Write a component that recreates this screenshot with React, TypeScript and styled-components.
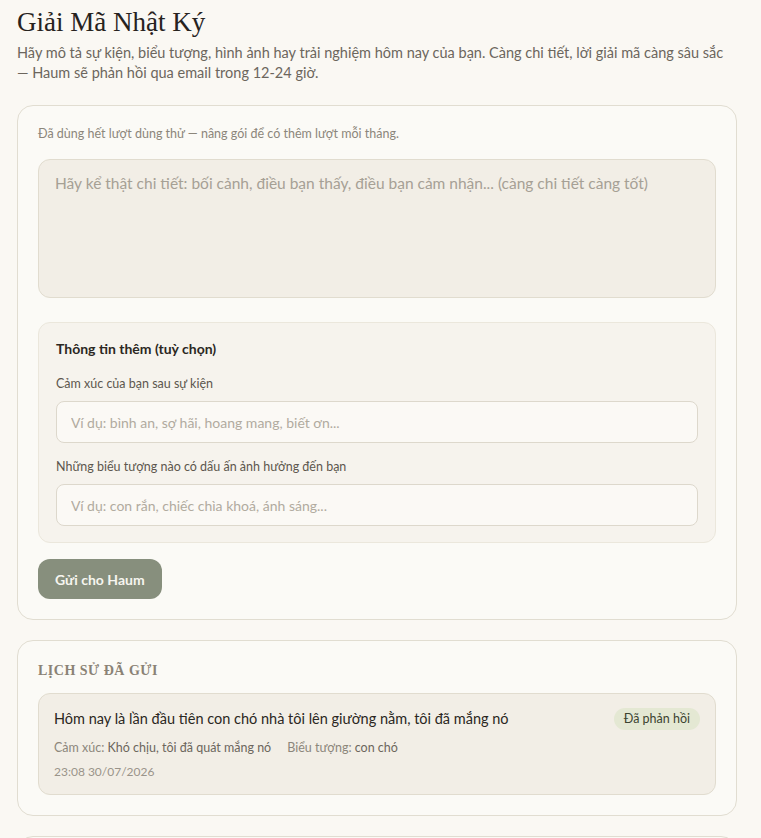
import React from 'react';
import styled, { createGlobalStyle } from 'styled-components';

const GlobalStyle = createGlobalStyle`
  * { box-sizing: border-box; }
  body {
    margin: 0;
    background: #faf8f3;
    font-family: Lato, "Noto Sans", sans-serif;
    color: #2b2722;
  }
`;

interface Entry {
  text: string;
  emotion: string;
  symbol: string;
  date: string;
  status: string;
}

const history: Entry[] = [
  {
    text: 'Hôm nay là lần đầu tiên con chó nhà tôi lên giường nằm, tôi đã mắng nó',
    emotion: 'Khó chịu, tôi đã quát mắng nó',
    symbol: 'con chó',
    date: '23:08 30/07/2026',
    status: 'Đã phản hồi',
  },
];

export default function App() {
  return (
    <>
      <GlobalStyle />
      <Page>
        <Title>Giải Mã Nhật Ký</Title>
        <Intro>
          Hãy mô tả sự kiện, biểu tượng, hình ảnh hay trải nghiệm hôm nay của bạn. Càng chi tiết, lời giải mã càng sâu sắc
          — Haum sẽ phản hồi qua email trong 12-24 giờ.
        </Intro>

        <Card>
          <Notice>Đã dùng hết lượt dùng thử — nâng gói để có thêm lượt mỗi tháng.</Notice>
          <Story placeholder="Hãy kể thật chi tiết: bối cảnh, điều bạn thấy, điều bạn cảm nhận... (càng chi tiết càng tốt)" />

          <Extra>
            <ExtraTitle>Thông tin thêm (tuỳ chọn)</ExtraTitle>
            <Field>
              <Label>Cảm xúc của bạn sau sự kiện</Label>
              <Input placeholder="Ví dụ: bình an, sợ hãi, hoang mang, biết ơn..." />
            </Field>
            <Field>
              <Label>Những biểu tượng nào có dấu ấn ảnh hưởng đến bạn</Label>
              <Input placeholder="Ví dụ: con rắn, chiếc chìa khoá, ánh sáng..." />
            </Field>
          </Extra>

          <SubmitButton type="button">Gửi cho Haum</SubmitButton>
        </Card>

        <Card>
          <SectionTitle>Lịch sử đã gửi</SectionTitle>
          {history.map((item, i) => (
            <Item key={i}>
              <ItemHead>
                <ItemText>{item.text}</ItemText>
                <Badge>{item.status}</Badge>
              </ItemHead>
              <Meta>
                <span>Cảm xúc: <strong>{item.emotion}</strong></span>
                <span>Biểu tượng: <strong>{item.symbol}</strong></span>
              </Meta>
              <DateLine>{item.date}</DateLine>
            </Item>
          ))}
        </Card>

        <Card />
      </Page>
    </>
  );
}

const Page = styled.div`
  width: 737px;
  padding: 7px 0 0 17px;
  display: flex;
  flex-direction: column;
`;

const Title = styled.h1`
  margin: 0;
  font-family: "Liberation Serif", "DejaVu Serif", serif;
  font-weight: 400;
  font-size: 27px;
  line-height: 30px;
  color: #27231e;
`;

const Intro = styled.p`
  margin: 6px 0 0;
  font-size: 14.5px;
  line-height: 20px;
  color: #6c665d;
`;

const Card = styled.section`
  margin-top: 20px;
  padding: 20px;
  border: 1px solid #e1ddd1;
  border-radius: 16px;
  background: #fbfaf6;
  display: flex;
  flex-direction: column;
  align-items: flex-start;

  &:first-of-type { margin-top: 22px; }
  &:last-child { min-height: 60px; }
`;

const Notice = styled.p`
  margin: 0 0 17px;
  font-size: 12.5px;
  line-height: 16px;
  color: #8c867b;
`;

const Story = styled.textarea`
  width: 100%;
  height: 139px;
  padding: 12px 16px;
  border: 1px solid #e1dccf;
  border-radius: 12px;
  background: #f2eee6;
  font-family: inherit;
  font-size: 15.5px;
  line-height: 22px;
  color: #2b2722;
  resize: none;
  outline: none;

  &::placeholder { color: #a6a095; }
`;

const Extra = styled.div`
  width: 100%;
  margin-top: 24px;
  padding: 17px 17px 16px;
  border: 1px solid #ebe7dc;
  border-radius: 12px;
  background: #f6f3ed;
  display: flex;
  flex-direction: column;
  gap: 16px;
`;

const ExtraTitle = styled.h3`
  margin: 0 0 2px;
  font-size: 14px;
  font-weight: 700;
  line-height: 18px;
  color: #2b2722;
`;

const Field = styled.label`
  display: flex;
  flex-direction: column;
  gap: 9px;
`;

const Label = styled.span`
  font-size: 12.5px;
  line-height: 16px;
  color: #5d574e;
`;

const Input = styled.input`
  width: 100%;
  height: 42px;
  padding: 0 14px;
  border: 1px solid #ddd8cc;
  border-radius: 8px;
  background: #fbf9f5;
  font-family: inherit;
  font-size: 14px;
  color: #2b2722;
  outline: none;

  &::placeholder { color: #b1ab9f; }
`;

const SubmitButton = styled.button`
  margin-top: 16px;
  height: 40px;
  padding: 0 17px;
  border: none;
  border-radius: 12px;
  background: #878f7d;
  font-family: inherit;
  font-size: 14px;
  font-weight: 700;
  color: #f6f5ef;
  cursor: pointer;
`;

const SectionTitle = styled.h2`
  margin: 2px 0 14px;
  font-family: "Liberation Serif", "DejaVu Serif", serif;
  font-size: 14px;
  font-weight: 700;
  letter-spacing: 0.5px;
  text-transform: uppercase;
  color: #8a8275;
`;

const Item = styled.div`
  width: 100%;
  padding: 14px 15px 14px;
  border: 1px solid #e1dccf;
  border-radius: 12px;
  background: #f2eee6;
  display: flex;
  flex-direction: column;
`;

const ItemHead = styled.div`
  display: flex;
  align-items: center;
  justify-content: space-between;
  gap: 12px;
`;

const ItemText = styled.p`
  margin: 0;
  font-size: 14.5px;
  line-height: 20px;
  color: #2b2722;
`;

const Badge = styled.span`
  padding: 4px 10px;
  border-radius: 999px;
  background: #e4e8d3;
  font-size: 12.5px;
  line-height: 14px;
  color: #3c4430;
  white-space: nowrap;
`;

const Meta = styled.div`
  margin-top: 10px;
  display: flex;
  gap: 16px;
  font-size: 12.5px;
  line-height: 16px;
  color: #8c867b;

  strong { font-weight: 400; color: #6c665d; }
`;

const DateLine = styled.div`
  margin-top: 8px;
  font-size: 12px;
  line-height: 16px;
  color: #9a948a;
`;
